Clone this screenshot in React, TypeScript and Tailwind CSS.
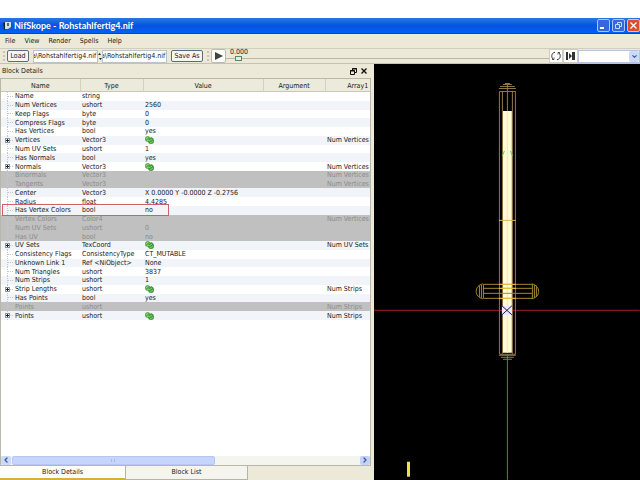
import { ChevronDown, ChevronLeft, ChevronRight } from "lucide-react";

type Row = {
  name: string;
  type: string;
  value?: string;
  array?: string;
  expandable?: boolean;
  disabled?: boolean;
  marked?: boolean;
};

const rows: Row[] = [
  { name: "Name", type: "string" },
  { name: "Num Vertices", type: "ushort", value: "2560" },
  { name: "Keep Flags", type: "byte", value: "0" },
  { name: "Compress Flags", type: "byte", value: "0" },
  { name: "Has Vertices", type: "bool", value: "yes" },
  { name: "Vertices", type: "Vector3", array: "Num Vertices", expandable: true },
  { name: "Num UV Sets", type: "ushort", value: "1" },
  { name: "Has Normals", type: "bool", value: "yes" },
  { name: "Normals", type: "Vector3", array: "Num Vertices", expandable: true },
  { name: "Binormals", type: "Vector3", array: "Num Vertices", disabled: true },
  { name: "Tangents", type: "Vector3", array: "Num Vertices", disabled: true },
  { name: "Center", type: "Vector3", value: "X 0.0000 Y -0.0000 Z -0.2756" },
  { name: "Radius", type: "float", value: "4.4285" },
  { name: "Has Vertex Colors", type: "bool", value: "no", marked: true },
  { name: "Vertex Colors", type: "Color4", array: "Num Vertices", disabled: true },
  { name: "Num UV Sets", type: "ushort", value: "0", disabled: true },
  { name: "Has UV", type: "bool", value: "no", disabled: true },
  { name: "UV Sets", type: "TexCoord", array: "Num UV Sets &", expandable: true },
  { name: "Consistency Flags", type: "ConsistencyType", value: "CT_MUTABLE" },
  { name: "Unknown Link 1", type: "Ref <NiObject>", value: "None" },
  { name: "Num Triangles", type: "ushort", value: "3837" },
  { name: "Num Strips", type: "ushort", value: "1" },
  { name: "Strip Lengths", type: "ushort", array: "Num Strips", expandable: true },
  { name: "Has Points", type: "bool", value: "yes" },
  { name: "Points", type: "ushort", array: "Num Strips", disabled: true },
  { name: "Points", type: "ushort", array: "Num Strips", expandable: true },
];

function TitleBar() {
  return (
    <header className="flex h-4 items-center bg-gradient-to-b from-[#2a76e4] via-[#0453e2] to-[#0560f5] border-b border-[#1245a8] pl-0.5">
      <svg className="h-[10px] w-[10px]" viewBox="0 0 10 10">
        <path d="M1 2l3-1v7l-2 1z" fill="#17232f" />
        <path d="M3 1h6v5l-3 2H3z" fill="#d9dfe4" />
        <path d="M5 2h2v3H5z" fill="#596877" />
      </svg>
      <h1 className="flex-1 pl-[2px] font-['Lato',sans-serif] text-[9px] font-bold leading-none text-white">NifSkope - Rohstahlfertig4.nif</h1>
      <div className="flex gap-[2px]">
        <button aria-label="Minimize" className="h-[13px] w-[13px] rounded-[2px] border border-[#a9c4f5] bg-[#3468dc]">
          <svg viewBox="0 0 11 11"><path d="M2 7h4v2H2z" fill="#fff" /></svg>
        </button>
        <button aria-label="Restore" className="h-[13px] w-[13px] rounded-[2px] border border-[#a9c4f5] bg-[#3468dc]">
          <svg viewBox="0 0 11 11" fill="none" stroke="#c9d9f8"><path d="M4.500 4V2.500h4v4H7M2.500 4.500h4v4h-4z" /></svg>
        </button>
        <button aria-label="Close" className="h-[13px] w-[13px] rounded-[2px] border border-[#f0b9a8] bg-[#dc4e2b]">
          <svg viewBox="0 0 11 11" stroke="#fff" strokeWidth="1.3"><path d="M2.500 2.500l6 6m0-6l-6 6" /></svg>
        </button>
      </div>
    </header>
  );
}

function ToolBar() {
  return (
    <div className="flex h-4 items-center border-t border-[#d2cebd] border-b border-b-[#c5c2b4]">
      <span className="ml-[3px] mr-0.5 h-[10px] border-l-2 border-dotted border-[#c9c5b5]" />
      <button className="h-3 w-[22px] rounded-[2px] border border-[#5d6b80] bg-[#f6f5ef] leading-none">Load</button>
      <input aria-label="Load file" defaultValue="a\Rohstahlfertig4.nif" className="ml-1 h-[13px] w-[65px] border border-[#b8c3cc] bg-white -indent-0.5" />
      <svg className="h-[9px] w-1" viewBox="0 0 4 9">
        <path d="M0 3l1.500-2L3 3zM1 6h3L2.500 8z" fill="#222" />
      </svg>
      <input aria-label="Save file" defaultValue="a\Rohstahlfertig4.nif" className="h-[13px] w-[65px] border border-[#b8c3cc] bg-white -indent-0.5" />
      <button className="ml-1 h-3 w-8 rounded-[2px] border border-[#5d6b80] bg-[#f6f5ef] leading-none">Save As</button>
      <span className="ml-1 mr-[2px] h-[10px] border-l-2 border-dotted border-[#c9c5b5]" />
      <button aria-label="Play" className="h-[14px] w-[15px] rounded-[2px] border border-[#bdbbb0] bg-[#fdfdfb]">
        <svg viewBox="0 0 13 12"><path d="M3 2l8 4-8 4z" fill="#3e443e" /></svg>
      </button>
      <label className="flex h-[14px] flex-1 flex-col">
        <span className="h-[6px] pl-1 leading-[6px]">0.000</span>
        <input
          type="range"
          min="0"
          max="100"
          defaultValue="3"
          className="h-[7px] w-full appearance-none bg-[linear-gradient(#b9b6a8,#b9b6a8)] bg-[length:100%_1px] bg-center bg-no-repeat [&::-webkit-slider-thumb]:h-[5px] [&::-webkit-slider-thumb]:w-[7px] [&::-webkit-slider-thumb]:appearance-none [&::-webkit-slider-thumb]:border [&::-webkit-slider-thumb]:border-[#4f8d63] [&::-webkit-slider-thumb]:bg-[#e1eee1]"
        />
      </label>
      <button aria-label="Loop" className="h-[14px] w-[14px] border border-[#d2d0c5] bg-white">
        <svg viewBox="0 0 12 12" fill="none" stroke="#333">
          <path d="M5 2.200C1 3 1 8 3.500 9.500M7 9.800c4-.8 4-5.800 1.500-7.300" />
          <path d="M2 9.500h2V7.500M10 2.500H8v2" strokeWidth=".8" />
        </svg>
      </button>
      <button aria-label="Switch animation" className="h-[14px] w-[15px] border border-[#d2d0c5] bg-white">
        <svg viewBox="0 0 13 12" fill="#333"><path d="M2 2h2v8H2zM5 3l3 3-3 3zM8 2h3v8H8z" /></svg>
      </button>
      <div className="relative w-[62px]">
        <select aria-label="Animation" className="block h-[13px] w-full appearance-none border border-[#b5c6dc] bg-white" />
        <span className="pointer-events-none absolute right-px top-px flex h-[11px] w-[10px] items-center justify-center rounded-[2px] bg-[#cbd9fb]">
          <ChevronDown size={7} strokeWidth={4} color="#42598f" />
        </span>
      </div>
    </div>
  );
}

function ArrayIcon() {
  return (
    <svg className="block h-2 w-[9px]" viewBox="0 0 9 8">
      <path d="M0 3Q0 0 3 0l2 1v4L3 6Q0 6 0 3z" fill="#5cb04a" />
      <path d="M4 3l2-2q3 1 3 4T6 8Q3 8 3 5z" fill="#3f9838" />
      <path d="M1 3l2-2M4 5l3-2M2 5l2-1M5 7l3-2" stroke="#a5dc90" strokeWidth=".8" />
    </svg>
  );
}

function TreeBranch({ expandable }: { expandable?: boolean }) {
  return (
    <svg className="h-[9px] w-[14px] shrink-0" viewBox="0 0 14 9">
      <path d="M6.500 0v9M7 4.500h5" stroke="#c6c6c6" strokeDasharray="1 1" />
      {expandable && (
        <>
          <rect x="4.500" y="2.500" width="4" height="4" fill="#fff" stroke="#8795a5" />
          <path d="M5 4.500h3M6.500 3v3" stroke="#222" />
        </>
      )}
    </svg>
  );
}

function rowStyle(row: Row, index: number) {
  if (row.disabled) return "bg-[#c0c0c0] text-[#8b8b8b]";
  return index % 2 ? "bg-[#f1f4f8]" : "bg-white";
}

function BlockTable() {
  return (
    <table className="h-[241px] w-full table-fixed border-collapse whitespace-nowrap text-left">
      <colgroup>
        <col className="w-[79px]" />
        <col className="w-[63px]" />
        <col className="w-[120px]" />
        <col className="w-[62px]" />
        <col />
      </colgroup>
      <thead>
        <tr className="h-[13px] bg-[#ebeadb] text-center shadow-[inset_0_-1px_#cbc7b8]">
          <th className="border-r border-[#d3d0c1] p-0 font-normal">Name</th>
          <th className="border-r border-[#d3d0c1] p-0 font-normal">Type</th>
          <th className="border-r border-[#d3d0c1] p-0 font-normal">Value</th>
          <th className="border-r border-[#d3d0c1] p-0 font-normal">Argument</th>
          <th className="p-0 pr-0.5 text-right font-normal">Array1</th>
        </tr>
      </thead>
      <tbody>
        {rows.map((row, i) => (
          <tr key={i} className={rowStyle(row, i)}>
            <td className="relative p-0">
              <div className="flex h-2 items-center">
                <TreeBranch expandable={row.expandable} />
                {row.name}
              </div>
              {row.marked && <span className="absolute -top-0.5 left-px z-10 h-3 w-[167px] border border-[#cf6068]" />}
            </td>
            <td className="p-0 pl-0.5">{row.type}</td>
            <td className="p-0 pl-0.5">{row.expandable ? <ArrayIcon /> : row.value}</td>
            <td className="p-0" />
            <td className="overflow-hidden p-0 pl-0.5">{row.array}</td>
          </tr>
        ))}
      </tbody>
    </table>
  );
}

function DetailsDock() {
  return (
    <section className="flex w-[58%] shrink-0 flex-col">
      <div className="flex h-[14px] items-center pl-0.5 pr-1">
        <h2 className="flex-1">Block Details</h2>
        <button aria-label="Float" className="mr-1 w-[7px]">
          <svg viewBox="0 0 7 7" fill="none" stroke="#111"><path d="M2.500 2V.500h4v4H5M.500 2.500h4v4h-4zM0 3h5M2 1h5" /></svg>
        </button>
        <button aria-label="Close panel" className="w-[6px]">
          <svg viewBox="0 0 6 6" stroke="#111" strokeWidth="1.4"><path d="M.500.500l5 5m0-5l-5 5" /></svg>
        </button>
      </div>
      <div className="flex flex-1 flex-col border border-[#b9b7a9] bg-white">
        <div className="flex-1">
          <BlockTable />
        </div>
        <div className="flex h-[9px] bg-[#f5f5ef]">
          <button aria-label="Scroll left" className="flex w-[10px] items-center justify-center rounded-[2px] bg-[#cad9fc]">
            <ChevronLeft size={8} strokeWidth={4} color="#42598f" />
          </button>
          <div className="flex flex-1">
            <div className="ml-px flex w-[58%] items-center justify-center rounded-[2px] border border-[#b5c8f3] bg-[#c5d5fd]">
              <span className="h-[3px] w-1 border-x border-[#a9bce8]" />
            </div>
          </div>
          <button aria-label="Scroll right" className="flex w-[10px] items-center justify-center rounded-[2px] bg-[#c2d2f9]">
            <ChevronRight size={8} strokeWidth={4} color="#42598f" />
          </button>
        </div>
      </div>
      <nav className="flex h-[14px]">
        <button className="w-[125px] border-b-2 border-[#d5b23c] bg-[#fdfdfa]">Block Details</button>
        <button className="w-[123px] border-x border-b border-[#b5b4a8] bg-[#f5f4ef]">Block List</button>
      </nav>
    </section>
  );
}

function Viewport() {
  return (
    <main className="min-w-0 flex-1 bg-black">
      <svg className="block h-full w-full" viewBox="0 0 266 416" fill="none" preserveAspectRatio="xMidYMid slice">
        {/* axes */}
        <path d="M0 246.500h266" stroke="#a51c25" />
        <path d="M133 291h1v125h-1z" fill="#2f9a35" />
        {/* blade */}
        <path d="M129 47h9v242h-9z" fill="#fffbd4" />
        <path d="M133.500 47v242" stroke="#f3eabf" />
        {/* long capsule */}
        <g stroke="#94794a">
          <path d="M125.500 27.500h16v263h-16zM128.500 27v263M138.500 27v263" />
          <path d="M133.500 20v27" />
          <path d="M125 24.500h17M126 22.500h15M129 20.500h9M131 19.500h5" />
          <path d="M125 291.500h17M127 293.500h13M129 295.500h9" />
          <path d="M125 156.500h17" stroke="#d3b558" />
        </g>
        {/* cross guard capsule */}
        <g stroke="#a7892d">
          <path d="M109.500 220.500h49v14h-49zM109 224.500h49M109 229.500h49" />
          <path d="M109 220c-9 2-9 13 0 15M158 220c9 2 9 13 0 15M107.500 221v13M105.500 222v11M160.500 221v13M162.500 222v11" />
          <path d="M125 220.500h17M125 224.500h17M125 234.500h17" stroke="#e7c93d" />
        </g>
        <path d="M130.500 87l-2 5M136.500 87l2 5" stroke="#60cf63" />
        <path d="M128 242h10v9h-10z" fill="#eee5ff" />
        <path d="M128 242l10 9m0-9l-10 9" stroke="#191b46" />
        <path d="M33 398h3v15h-3z" fill="#eae443" />
      </svg>
    </main>
  );
}

export default function App() {
  return (
    <div className="flex min-h-screen flex-col bg-white pt-[18px] font-['DejaVu_Sans_Condensed','DejaVu_Sans',sans-serif] text-[7px] leading-[8px] text-[#202020]">
      <div className="flex flex-1 flex-col bg-[#ece9d8]">
        <TitleBar />
        <nav className="flex h-[14px] items-center gap-[9px] pl-[5px]">
          <button>File</button>
          <button>View</button>
          <button>Render</button>
          <button>Spells</button>
          <button>Help</button>
        </nav>
        <ToolBar />
        <div className="flex flex-1 gap-[3px] border-b border-[#8290b2]">
          <DetailsDock />
          <Viewport />
        </div>
      </div>
    </div>
  );
}
